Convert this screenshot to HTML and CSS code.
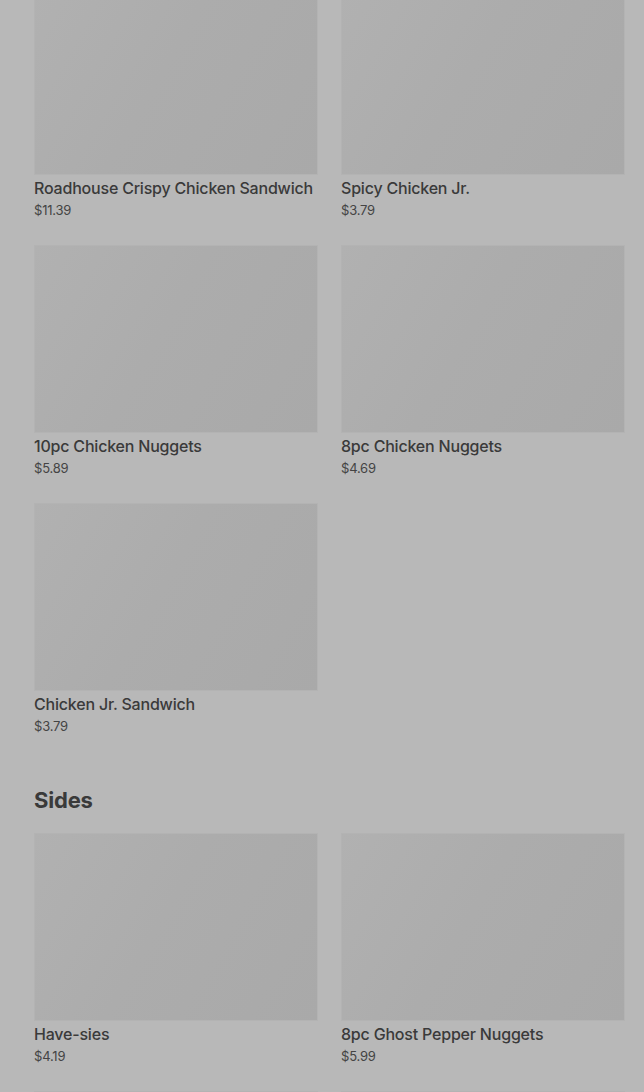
FILE: index.html
```html
<!DOCTYPE html>
<html lang="en">
<head>
    <meta charset="UTF-8">
    <meta name="viewport" content="width=device-width, initial-scale=1.0">
    <title>Menu</title>
    <link rel="stylesheet" href="styles.css">
</head>
<body>
    <div class="menu">
        <div class="grid">
            <div class="card">
                <div class="thumb"></div>
                <div class="name">Roadhouse Crispy Chicken Sandwich</div>
                <div class="price">$11.39</div>
            </div>
            <div class="card">
                <div class="thumb"></div>
                <div class="name">Spicy Chicken Jr.</div>
                <div class="price">$3.79</div>
            </div>
            <div class="card">
                <div class="thumb"></div>
                <div class="name">10pc Chicken Nuggets</div>
                <div class="price">$5.89</div>
            </div>
            <div class="card">
                <div class="thumb"></div>
                <div class="name">8pc Chicken Nuggets</div>
                <div class="price">$4.69</div>
            </div>
            <div class="card">
                <div class="thumb"></div>
                <div class="name">Chicken Jr. Sandwich</div>
                <div class="price">$3.79</div>
            </div>
        </div>

        <h2 class="section-title">Sides</h2>
        <div class="grid">
            <div class="card">
                <div class="thumb"></div>
                <div class="name">Have-sies</div>
                <div class="price">$4.19</div>
            </div>
            <div class="card">
                <div class="thumb"></div>
                <div class="name">8pc Ghost Pepper Nuggets</div>
                <div class="price">$5.99</div>
            </div>
            <div class="card">
                <div class="thumb"></div>
            </div>
            <div class="card">
                <div class="thumb"></div>
            </div>
        </div>
    </div>
</body>
</html>
```

FILE: styles.css
```css
body {
    margin: 0;
    padding: 0;
    background-color: #b8b8b8;
    color: #3a3a3a;
    font-family: Inter, "Noto Sans", sans-serif;
    height: 1092px;
    overflow: hidden;
}
.menu {
    padding: 0 20px 0 34px;
    margin-top: -13px;
}
.grid {
    display: grid;
    grid-template-columns: 284px 284px;
    column-gap: 23px;
}
.card {
    height: 258px;
}
.thumb {
    height: 188px;
    background: linear-gradient(120deg, #b1b1b1 0%, #acacac 45%, #a9a9a9 100%);
    box-shadow: inset 0 0 0 1px #b3b3b3;
}
.name {
    margin-top: 3px;
    font-size: 16px;
    font-weight: 500;
    line-height: 20px;
    letter-spacing: -0.2px;
    white-space: nowrap;
}
.price {
    margin-top: 3px;
    font-size: 13px;
    line-height: 18px;
    letter-spacing: -0.2px;
    color: #444;
}
.section-title {
    margin: 25px 0 19px;
    font-size: 22px;
    font-weight: 700;
    line-height: 28px;
    letter-spacing: -0.2px;
}
```
